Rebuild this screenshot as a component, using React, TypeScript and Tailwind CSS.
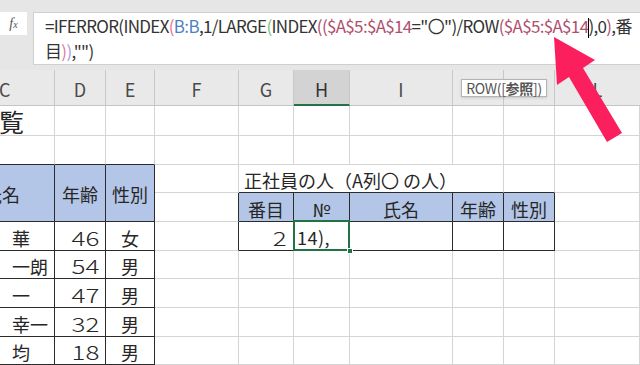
import React from "react";

const FONT = { fontFamily: '"Noto Sans CJK JP", "Noto Sans", sans-serif' };

function Num({ children }: { children: React.ReactNode }) {
  return (
    <span className="inline-block origin-right scale-x-[1.3] font-light text-[20px]">
      {children}
    </span>
  );
}

const g = "border-r border-b border-[#d4d4d4]";
const blackBR = "border-r border-b border-[#2b2b2b]";
const grayR_blackB = "border-r border-r-[#d4d4d4] border-b border-b-[#2b2b2b]";
const blackR_grayB = "border-r border-r-[#2b2b2b] border-b border-b-[#d4d4d4]";

export default function App() {
  const names = ["華", "一朗", "一", "幸一", "均"];
  const ages = ["46", "54", "47", "32", "18"];
  const sexes = ["女", "男", "男", "男", "男"];

  return (
    <div
      className="relative w-[640px] h-[365px] overflow-hidden bg-white text-[#262626]"
      style={FONT}
    >
      {/* Formula bar */}
      <div className="h-[70px] bg-[#e6e6e6] flex items-start pt-[12px] gap-[6px]">
        <div className="w-[27px] h-[23px] bg-white flex items-center justify-center text-[#555]">
          <span className="font-['Liberation_Serif',serif] italic text-[14px] leading-none">f</span>
          <span className="font-['Liberation_Serif',serif] italic text-[10px] leading-none mt-[3px]">x</span>
        </div>
        <div className="flex-1 -mr-[3px] h-[53px] bg-white border border-[#cfcfcf] pl-[11px] text-[17px] leading-[25px] tracking-[-0.68px] text-[#333] whitespace-nowrap">
          <div>
            =IFERROR(INDEX<span className="text-[#e07a95]">(</span>
            <span className="text-[#4f7fc0]">B:B</span>,1/LARGE
            <span className="text-[#7cc47c]">(</span>INDEX
            <span className="text-[#b04f6e]">(</span>
            <span className="text-[#b04f6e]">($A$5:$A$14</span>="〇")/ROW
            <span className="text-[#b04f6e]">($A$5:$A$14</span>
            <span className="inline-block w-px h-[20px] bg-black align-middle -mr-px" />
            ),0<span className="text-[#b04f6e]">)</span>,番
          </div>
          <div>
            目<span className="text-[#e07a95]">)</span>
            <span className="text-[#a99ad6]">)</span>,"")
          </div>
        </div>
      </div>

      {/* Column headers */}
      <div className="grid grid-cols-[55px_51px_49px_84px_55px_56px_103px_51px_51px_85px] h-[36px] bg-[#e9e9e9] text-[18px] text-[#4a4a4a] border-b border-[#c4c4c4]">
        <div className="border-r border-[#c8c8c8] flex items-center pl-0 pt-[4px]">
          <span className="-ml-[1px]">C</span>
        </div>
        <div className="border-r border-[#c8c8c8] flex items-center justify-center pt-[4px]">D</div>
        <div className="border-r border-[#c8c8c8] flex items-center justify-center pt-[4px]">E</div>
        <div className="border-r border-[#c8c8c8] flex items-center justify-center pt-[4px]">F</div>
        <div className="border-r border-[#c8c8c8] flex items-center justify-center pt-[4px]">G</div>
        <div className="bg-[#d3d3d3] border-r border-[#c8c8c8] border-b-2 border-b-[#217346] -mb-px flex items-center justify-center pt-[4px] text-[#333]">
          H
        </div>
        <div className="border-r border-[#c8c8c8] flex items-center justify-center pt-[4px]">I</div>
        <div className="border-r border-[#c8c8c8] flex items-center justify-center pt-[4px]">J</div>
        <div className="border-r border-[#c8c8c8] flex items-center justify-center pt-[4px]">K</div>
        <div className="flex items-center justify-center pt-[4px]">L</div>
      </div>

      {/* Cells */}
      <div className="grid grid-cols-[55px_51px_49px_84px_55px_56px_103px_51px_51px_85px] grid-rows-[30px_29px_28px_29px_29px_28px_29px_29px_28px] text-[18px] leading-none">
        {/* row 1 */}
        <div className={`${g} flex items-end pb-[1px] text-[25px]`}>
          <span className="-ml-[1px]">覧</span>
        </div>
        <div className={g} />
        <div className={g} />
        <div className={g} />
        <div className={g} />
        <div className={g} />
        <div className={g} />
        <div className={g} />
        <div className={g} />
        <div className={g} />

        {/* row 2 */}
        <div className={grayR_blackB} />
        <div className={grayR_blackB} />
        <div className={grayR_blackB} />
        <div className={g} />
        <div className={g} />
        <div className={g} />
        <div className={g} />
        <div className={g} />
        <div className={g} />
        <div className={g} />

        {/* row 3 */}
        <div className={`${blackBR} row-span-2 bg-[#b4c6e7] relative overflow-hidden`}>
          <div className="absolute inset-y-0 -left-[53px] w-[110px] flex items-center justify-center pt-[2px]">
            氏名
          </div>
        </div>
        <div className={`${blackBR} row-span-2 bg-[#b4c6e7] flex items-center justify-center pt-[2px]`}>
          年齢
        </div>
        <div className={`${blackBR} row-span-2 bg-[#b4c6e7] flex items-center justify-center pt-[2px]`}>
          性別
        </div>
        <div className={g} />
        <div className="col-span-4 border-r border-r-[#d4d4d4] border-b border-b-[#2b2b2b] flex items-end pb-[3px] pl-[5px] whitespace-nowrap">
          <span className="relative z-10">正社員の人（A列〇 の人）</span>
        </div>
        <div className={grayR_blackB} />
        <div className={g} />

        {/* row 4 */}
        <div className={blackR_grayB} />
        <div className={`${blackBR} bg-[#b4c6e7] flex items-center justify-center pt-[3px]`}>番目</div>
        <div className={`${blackBR} bg-[#b4c6e7] flex items-center justify-center pt-[3px]`}>№</div>
        <div className={`${blackBR} bg-[#b4c6e7] flex items-center justify-center pt-[3px]`}>氏名</div>
        <div className={`${blackBR} bg-[#b4c6e7] flex items-center justify-center pt-[3px]`}>年齢</div>
        <div className={`${blackBR} bg-[#b4c6e7] flex items-center justify-center pt-[3px]`}>性別</div>
        <div className={g} />

        {/* data rows */}
        {names.map((n, i) => (
          <React.Fragment key={i}>
            <div className={`${blackBR} flex items-center pl-[12px] pt-[3px]`}>{n}</div>
            <div className={`${blackBR} flex items-center justify-end pr-[6px] pt-[3px]`}>
              <Num>{ages[i]}</Num>
            </div>
            <div className={`${blackBR} flex items-center justify-center pt-[3px]`}>{sexes[i]}</div>
            {i === 0 ? (
              <>
                <div className={blackR_grayB} />
                <div className={`${blackBR} flex items-center justify-end pr-[6px] pt-[3px]`}>
                  <Num>2</Num>
                </div>
                <div className={`${blackBR} relative flex items-center pl-[3px] pt-[2px] text-[18px] tracking-[0.5px]`}>
                  14),
                  <div className="absolute -left-px -top-[2px] right-[-1px] bottom-[-1px] border-2 border-[#217346]" />
                  <div className="absolute -right-[4px] -bottom-[4px] w-[6px] h-[6px] bg-[#217346] border border-white" />
                </div>
                <div className={blackBR} />
                <div className={blackBR} />
                <div className={blackBR} />
                <div className={g} />
              </>
            ) : (
              <>
                <div className={g} />
                <div className={g} />
                <div className={g} />
                <div className={g} />
                <div className={g} />
                <div className={g} />
                <div className={g} />
              </>
            )}
          </React.Fragment>
        ))}
      </div>

      {/* Tooltip */}
      <div className="absolute left-[461px] top-[79px] w-[86px] h-[18px] bg-white border border-[#b5b5b5] shadow-sm flex items-center justify-center text-[14px] tracking-[-0.3px] text-[#555] leading-none whitespace-nowrap">
        ROW([<span className="font-bold">参照</span>])
      </div>

      {/* Pink arrow */}
      <svg className="absolute left-0 top-0" width="640" height="365" viewBox="0 0 640 365">
        <polygon
          points="554,37 595,60 583,68 622,133 607,142 569,77 557,85"
          fill="#fb1f5e"
        />
      </svg>
    </div>
  );
}
